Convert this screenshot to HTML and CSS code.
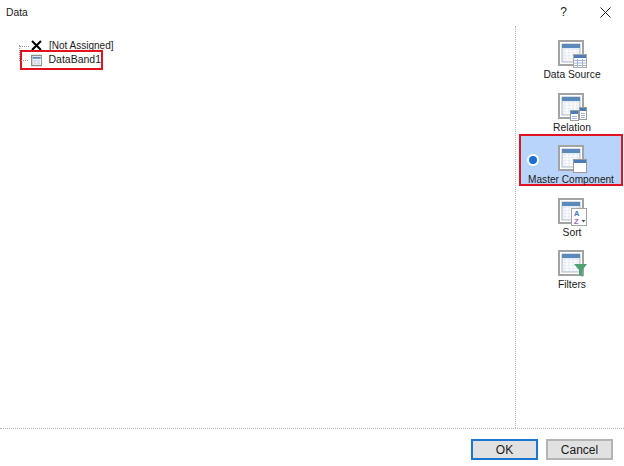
FILE: index.html
```html
<!DOCTYPE html>
<html lang="en">
  <head>
    <meta charset="UTF-8" />
    <title>Data</title>
    <link rel="stylesheet" href="styles.css">
  </head>
  <body>
    <svg class="defs" width="0" height="0">
      <symbol id="frame" viewBox="0 0 26 26">
        <rect x="1" y="1" width="24" height="24" fill="#fff" stroke="#a3a3a3" stroke-width="2"/>
        <rect x="4" y="4" width="18" height="18" fill="#e3ebf5" stroke="#b4bcc6" stroke-width="1"/>
        <rect x="4" y="4" width="18" height="4" fill="#5a89bc"/>
        <path d="M5 11h16M5 14h16M5 17h16M5 20h16M9 9v12M13 9v12M17 9v12" stroke="#fff" stroke-width="1"/>
      </symbol>
      <symbol id="grid" viewBox="0 0 14 14">
        <rect x="0" y="0" width="14" height="14" fill="#fff"/>
        <rect x="0.5" y="0.5" width="13" height="13" fill="#fff" stroke="#a8a8a8"/>
        <rect x="1" y="1" width="12" height="3" fill="#4a7db5"/>
        <path d="M1 6.5h12M1 9h12M1 11.5h12M4.5 5v8M9.5 5v8" stroke="#9fb7d3" stroke-width="1"/>
      </symbol>
    </svg>

    <header class="titlebar">
      <span class="title">Data</span>
      <span class="help">?</span>
      <svg class="close" width="11" height="11" viewBox="0 0 11 11"><path d="M.5.5l10 10M10.5.5l-10 10" stroke="#222" stroke-width="1" fill="none"/></svg>
    </header>

    <main class="content">
      <section class="tree">
        <div class="tree-row">
          <span class="lines lines-first"></span>
          <svg class="cross" width="11" height="11" viewBox="0 0 11 11"><path d="M1 1l9 9M10 1l-9 9" stroke="#000" stroke-width="2" fill="none"/></svg>
          <span class="node-text">[Not Assigned]</span>
        </div>
        <div class="tree-row tree-row-selected">
          <span class="lines lines-last"></span>
          <svg class="band" width="13" height="13" viewBox="0 0 13 13">
            <rect x="0.75" y="0.75" width="11.5" height="11.5" fill="#eef2f7" stroke="#8d8d8d" stroke-width="1.5"/>
            <rect x="2" y="2.5" width="9" height="2" fill="#5a89bc"/>
            <path d="M3 7h3M7 7h3M3 9.5h3M7 9.5h3" stroke="#aebccd" stroke-width="1"/>
          </svg>
          <span class="node-text">DataBand1</span>
        </div>
      </section>

      <aside class="side">
        <div class="side-item">
          <span class="icon">
            <svg class="icon-frame"><use href="#frame"/></svg>
            <svg class="icon-badge"><use href="#grid"/></svg>
          </span>
          <span>Data Source</span>
        </div>
        <div class="side-item">
          <span class="icon">
            <svg class="icon-frame"><use href="#frame"/></svg>
            <svg class="icon-badge icon-badge-rel" viewBox="0 0 17 14">
              <rect x="0.5" y="3.5" width="8" height="10" fill="#fff" stroke="#999"/>
              <rect x="1" y="4" width="7" height="3" fill="#4a7db5"/>
              <path d="M2 9.5h5M2 11.5h5" stroke="#9fb7d3"/>
              <rect x="9.5" y="0.5" width="7" height="12" fill="#fff" stroke="#999"/>
              <rect x="10" y="1" width="6" height="3" fill="#4a7db5"/>
              <path d="M11 6.5h4M11 8.5h4M11 10.5h4" stroke="#9fb7d3"/>
            </svg>
          </span>
          <span>Relation</span>
        </div>
        <div class="side-item side-item-active">
          <span class="radio"></span>
          <span class="icon">
            <svg class="icon-frame"><use href="#frame"/></svg>
            <svg class="icon-badge" viewBox="0 0 14 14">
              <rect x="0.5" y="0.5" width="13" height="13" fill="#fff" stroke="#9a9a9a"/>
              <rect x="1" y="1" width="12" height="3" fill="#4a7db5"/>
            </svg>
          </span>
          <span class="side-label">Master Component</span>
        </div>
        <div class="side-item">
          <span class="icon">
            <svg class="icon-frame"><use href="#frame"/></svg>
            <svg class="icon-badge icon-badge-sort" viewBox="0 0 16 18">
              <rect x="0.5" y="0.5" width="15" height="17" fill="#fff" stroke="#a3a3a3"/>
              <text x="3" y="7.5" class="sort-a">A</text>
              <text x="3" y="16" class="sort-z">Z</text>
              <path d="M10.5 12h4l-2 2.5z" fill="#555"/>
            </svg>
          </span>
          <span>Sort</span>
        </div>
        <div class="side-item">
          <span class="icon">
            <svg class="icon-frame"><use href="#frame"/></svg>
            <svg class="icon-badge icon-badge-filter" viewBox="0 0 13 13">
              <path d="M0 0h13L8.5 6v7L5 10.5V6z" fill="#4fa373"/>
            </svg>
          </span>
          <span>Filters</span>
        </div>
      </aside>
    </main>

    <footer class="footer">
      <button class="btn btn-default">OK</button>
      <button class="btn">Cancel</button>
    </footer>
  </body>
</html>
```

FILE: styles.css
```css
:root {
  font-family: "Liberation Sans", Arial, sans-serif;
  font-size: 10.3px;
  color: #1a1a1a;
}
body {
  width: 624px;
  height: 466px;
  margin: 0;
  background: #fff;
  overflow: hidden;
  display: flex;
  flex-direction: column;
}
.defs {
  display: none;
}
.titlebar {
  height: 26px;
  flex: none;
  display: flex;
  align-items: center;
  padding: 0 13px 2px 6px;
  box-sizing: border-box;
}
.title {
  flex: 1;
}
.help {
  margin-right: 33px;
  font-size: 12px;
}
.content {
  flex: 1;
  display: flex;
  min-height: 0;
}
.tree {
  flex: 1;
  padding: 13px 0 0 20px;
}
.tree-row {
  display: flex;
  align-items: center;
  height: 13px;
  position: relative;
}
.tree-row-selected {
  height: 16px;
  width: 79px;
  margin-top: -2px;
  border: 2px solid #e0141e;
}
.lines {
  position: absolute;
  border-bottom: 1px dotted #999;
}
.lines-first {
  left: -1px;
  top: 7px;
  width: 10px;
  height: 0;
}
.lines-last {
  left: -3px;
  top: -7px;
  width: 8px;
  height: 15px;
  border-left: 1px dotted #999;
}
.cross {
  margin-left: 11px;
}
.band {
  margin-left: 9px;
}
.node-text {
  margin-left: 7px;
  font-size: 10px;
}
.tree-row-selected .node-text {
  font-size: 10.5px;
  margin-left: 6px;
  margin-bottom: 2px;
}
.side {
  width: 109px;
  flex: none;
  border-left: 1px dotted #b5b5b5;
  padding: 14px 0 0 3px;
  box-sizing: border-box;
  display: flex;
  flex-direction: column;
  gap: 0.5px;
}
.side-item {
  width: 104px;
  height: 52px;
  box-sizing: border-box;
  display: flex;
  flex-direction: column;
  align-items: center;
  padding-left: 2px;
  position: relative;
  text-align: center;
  line-height: 13px;
}
.side-item-active {
  background: #b9d4fb;
  border: 2px solid #e0141e;
  padding: 9px 0 0;
  margin: -11px 0 11px;
}
.side-item-active .icon {
  margin-left: 2px;
}
.side-label {
  font-size: 10.1px;
}
.radio {
  position: absolute;
  left: 8px;
  top: 20px;
  width: 8px;
  height: 8px;
  background: #1a6fd8;
  border-radius: 50%;
  box-shadow: 0 0 0 2px #fff;
}
.icon {
  position: relative;
  display: block;
  flex: none;
  width: 28px;
  height: 28px;
}
.icon-frame {
  position: absolute;
  left: 0;
  top: 0;
  width: 26px;
  height: 26px;
}
.icon-badge {
  position: absolute;
  right: -1px;
  bottom: 0;
  width: 14px;
  height: 14px;
}
.icon-badge-rel {
  width: 17px;
}
.icon-badge-sort {
  width: 16px;
  height: 18px;
}
.icon-badge-filter {
  width: 13px;
  height: 13px;
  bottom: 1px;
}
.sort-a {
  font-size: 7.5px;
  font-weight: bold;
  fill: #3d78c0;
}
.sort-z {
  font-size: 7.5px;
  font-weight: bold;
  fill: #9a5fc0;
}
.footer {
  flex: none;
  height: 38px;
  border-top: 1px dotted #b5b5b5;
  display: flex;
  justify-content: flex-end;
  gap: 8px;
  padding: 10px 11px 0 0;
  box-sizing: border-box;
}
.btn {
  width: 67px;
  height: 21px;
  padding: 0;
  font: inherit;
  font-size: 12px;
  color: #1a1a1a;
  background: #e1e1e1;
  border: 2px solid #b4b4b4;
}
.btn-default {
  border-color: #1b76cf;
}
```
